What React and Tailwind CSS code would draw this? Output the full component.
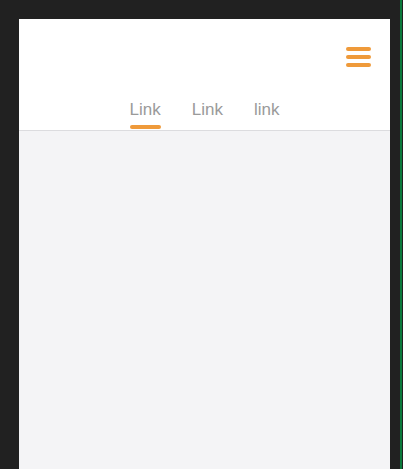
const links = ['Link', 'Link', 'link'];

const App = () => {
  return (
    <div className="w-[403px] h-[469px] bg-[#212121] flex overflow-hidden" style={{ fontFamily: '"Liberation Sans", Arial, sans-serif' }}>
      <div className="ml-[19px] mt-[19px] w-[371px] flex flex-col bg-white">
        {/* Header */}
        <div className="h-[112px] flex flex-col border-b border-[#dcdcdf]">
          <div className="flex justify-end pt-[28px] pr-[19px]">
            <button className="w-[25px] flex flex-col gap-[4.5px]">
              <span className="block h-[3.5px] w-full rounded-full bg-[#ef9a3a]" />
              <span className="block h-[3.5px] w-full rounded-full bg-[#ef9a3a]" />
              <span className="block h-[3.5px] w-full rounded-full bg-[#ef9a3a]" />
            </button>
          </div>
          <nav className="mt-auto flex justify-center gap-[31px]">
            {links.map((label, idx) => (
              <div key={idx} className="flex flex-col items-center">
                <span className="text-[17px] leading-[20px] text-[#9a9a9a]">{label}</span>
                <span className={`mt-[5px] mb-[1px] h-[4px] w-full rounded-full ${idx === 0 ? 'bg-[#ef9a3a]' : 'bg-transparent'}`} />
              </div>
            ))}
          </nav>
        </div>
        {/* Body */}
        <div className="flex-1 bg-[#f4f4f6]" />
      </div>
      <div className="ml-auto mr-[1px] w-[2px] bg-[#0c7a3c]" />
    </div>
  );
};

export default App;
